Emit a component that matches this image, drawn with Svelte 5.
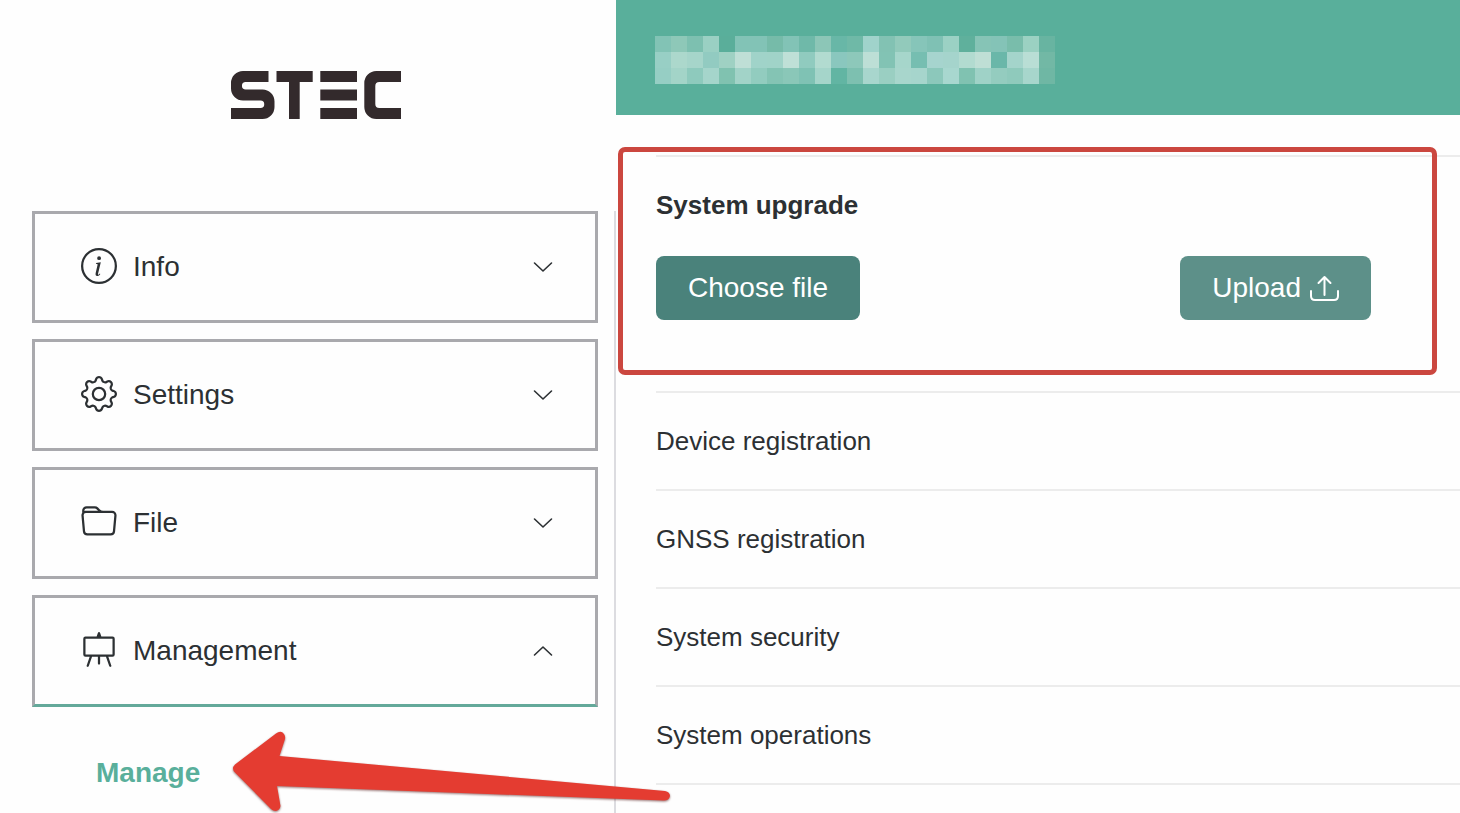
<script lang="ts">
    type MenuItem = { label: string; icon: string[] }

    const menu: MenuItem[] = [
        {
            label: 'Info',
            icon: [
                'M8 15A7 7 0 1 1 8 1a7 7 0 0 1 0 14zm0 1A8 8 0 1 0 8 0a8 8 0 0 0 0 16z',
                'M8.800 6.300 6.700 6.650 6.620 7.020 7.100 7.100C7.350 7.160 7.400 7.250 7.340 7.500L6.520 11.100C6.350 12 6.580 12.450 7.150 12.450 7.700 12.450 8.250 12.100 8.580 11.500L8.320 11.330C8.050 11.700 7.850 11.850 7.700 11.850 7.530 11.850 7.520 11.670 7.580 11.400ZM8.900 4.500a.86.86 0 1 1-1.720 0 .86.86 0 0 1 1.720 0z'
            ]
        },
        {
            label: 'Settings',
            icon: [
                'M8 4.754a3.246 3.246 0 1 0 0 6.492 3.246 3.246 0 0 0 0-6.492zM5.754 8a2.246 2.246 0 1 1 4.492 0 2.246 2.246 0 0 1-4.492 0z',
                'M9.796 1.343c-.527-1.79-3.065-1.79-3.592 0l-.094.319a.873.873 0 0 1-1.255.52l-.292-.16c-1.64-.892-3.433.902-2.54 2.541l.159.292a.873.873 0 0 1-.52 1.255l-.319.094c-1.79.527-1.79 3.065 0 3.592l.319.094a.873.873 0 0 1 .52 1.255l-.16.292c-.892 1.64.901 3.434 2.541 2.54l.292-.159a.873.873 0 0 1 1.255.52l.094.319c.527 1.79 3.065 1.79 3.592 0l.094-.319a.873.873 0 0 1 1.255-.52l.292.16c1.64.893 3.434-.902 2.54-2.541l-.159-.292a.873.873 0 0 1 .52-1.255l.319-.094c1.79-.527 1.79-3.065 0-3.592l-.319-.094a.873.873 0 0 1-.52-1.255l.16-.292c.893-1.64-.902-3.433-2.541-2.54l-.292.159a.873.873 0 0 1-1.255-.52l-.094-.319zm-2.633.283c.246-.835 1.428-.835 1.674 0l.094.319a1.873 1.873 0 0 0 2.693 1.115l.291-.16c.764-.415 1.6.42 1.184 1.185l-.159.292a1.873 1.873 0 0 0 1.116 2.692l.318.094c.835.246.835 1.428 0 1.674l-.319.094a1.873 1.873 0 0 0-1.115 2.693l.16.291c.415.764-.42 1.6-1.185 1.184l-.291-.159a1.873 1.873 0 0 0-2.693 1.116l-.094.318c-.246.835-1.428.835-1.674 0l-.094-.319a1.873 1.873 0 0 0-2.692-1.115l-.292.16c-.764.415-1.6-.42-1.184-1.185l.159-.291A1.873 1.873 0 0 0 1.945 8.93l-.319-.094c-.835-.246-.835-1.428 0-1.674l.319-.094A1.873 1.873 0 0 0 3.06 4.377l-.16-.292c-.415-.764.42-1.6 1.185-1.184l.292.159a1.873 1.873 0 0 0 2.692-1.115l.094-.319z'
            ]
        },
        {
            label: 'File',
            icon: [
                'M.54 3.87.5 3a2 2 0 0 1 2-2h3.672a2 2 0 0 1 1.414.586l.828.828A2 2 0 0 0 9.828 3h3.982a2 2 0 0 1 1.992 2.181l-.637 7A2 2 0 0 1 13.174 14H2.826a2 2 0 0 1-1.991-1.819l-.637-7a1.99 1.99 0 0 1 .342-1.31zM2.19 4a1 1 0 0 0-.996 1.09l.637 7a1 1 0 0 0 .995.91h10.348a1 1 0 0 0 .995-.91l.637-7A1 1 0 0 0 13.81 4H2.19zm4.69-1.707A1 1 0 0 0 6.172 2H2.5a1 1 0 0 0-1 .981l.006.139C1.72 3.042 1.95 3 2.19 3h5.396l-.707-.707z'
            ]
        },
        {
            label: 'Management',
            icon: [
                'M8 0a.5.5 0 0 1 .473.337L9.046 2H14a1 1 0 0 1 1 1v7a1 1 0 0 1-1 1h-1.85l1.323 3.837a.5.5 0 1 1-.946.326L11.092 11H8.5v3a.5.5 0 0 1-1 0v-3H4.908l-1.435 4.163a.5.5 0 1 1-.946-.326L3.85 11H2a1 1 0 0 1-1-1V3a1 1 0 0 1 1-1h4.954L7.527.337A.5.5 0 0 1 8 0zM14 3v7H2V3h12z'
            ]
        }
    ]

    const sections = ['Device registration', 'GNSS registration', 'System security', 'System operations']

    // device name is pixelated, one colour per block
    const mosaic = [
        '82c3b5 8ec8b8 7dc0b0 9ad0c3 5aae9a 82c3b6 82c3b6 76bba9 82c3b6 6fb9a9 8cc6b7 68b7a7 6fb9a7 a0d3cb 82c2b3 92cabb 86c5b9 7fc1b4 9bd1c4 5fb09c 86c4b6 84c3b7 79bdab 9bd1c2 68b4a1',
        '98cfc5 acd8cc a6d5ca 92cbc1 9fd1c3 bfdfd6 a0d3c9 a0d3c8 bfe0d7 90cbbf b2dbd0 8ac7be 8dc8ba bddfd6 82c3b4 a6d6cb 76beb1 a6d4ce a5d4cc b2dbd0 bfdfd5 6ab7a9 a4d4cb b9ded5 72b8a5',
        '96cec4 a3d4c8 8ecabd a5d5cb 80c2b0 a2d3c8 92ccbf 84c4b4 8ac7b8 7fc2b4 a5d5ca 62b5a3 7dc0b0 a8d6cd 9acfc2 a8d6cc a6d5cc 8cc8bb a8d7cf 80c2b1 9fd2c7 94ccbf 8fcabc a7d6cc 6fb7a4'
    ].map((row) => row.split(' '))

    let opened = 'Management'
    let fileInput: HTMLInputElement

    function toggle(label: string) {
        opened = opened === label ? '' : label
    }
</script>

<div class="page">
    <aside>
        <div class="logo">
            <svg viewBox="0 0 170 48" width="170" height="48" role="img" aria-label="STEC">
                <path d="M37.5 0H12A12 12 0 0 0 0 12V17.5A12 12 0 0 0 12 29.5H29.5A3.75 3.75 0 0 1 29.5 37H0V48H31.5A12 12 0 0 0 43.5 36V30.5A12 12 0 0 0 31.5 18.5H14.7A3.75 3.75 0 0 1 14.7 11H37.5Z" />
                <path d="M45.5 0H81.7V11H68.7V48H58V11H45.5Z" />
                <path d="M89.3 0H126V11H89.3ZM89.3 18.5H126V29.5H89.3ZM89.3 37H126V48H89.3Z" />
                <path d="M170 0H145.3A12 12 0 0 0 133.3 12V36A12 12 0 0 0 145.3 48H170V37H148.3A4 4 0 0 1 144.3 33V15A4 4 0 0 1 148.3 11H170Z" />
            </svg>
        </div>

        <nav>
            {#each menu as item}
                <button class="menu-item" class:opened={opened === item.label} on:click={() => toggle(item.label)}>
                    <svg class="icon" viewBox="0 0 16 16" aria-hidden="true">
                        {#each item.icon as d}
                            <path {d} />
                        {/each}
                    </svg>
                    <span>{item.label}</span>
                    <svg class="chevron" viewBox="0 0 20 12" aria-hidden="true">
                        <path d="M1.5 2 10 10 18.5 2" />
                    </svg>
                </button>
            {/each}

            {#if opened === 'Management'}
                <div class="submenu">
                    <a href="#manage">Manage</a>
                    <svg class="pointer" viewBox="0 0 440 84" aria-hidden="true">
                        <path d="M3 34.5 44 3.5Q49 0 52 4 53.500 6 53 9L47.500 26 433 61Q438 62 438 66 437 70.500 432 70.500L45 56 48.500 76Q48 80 44 81 41 81 39 79L3 42.500Q-1 38.500 3 34.500Z" />
                    </svg>
                </div>
            {/if}
        </nav>
    </aside>

    <main>
        <header>
            <svg viewBox="0 0 400 48" width="400" height="48" shape-rendering="crispEdges" aria-hidden="true">
                {#each mosaic as row, y}
                    {#each row as color, x}
                        <rect x={x * 16} y={y * 16} width="16" height="16" fill={`#${ color }`} />
                    {/each}
                {/each}
            </svg>
        </header>

        <div class="sections">
            <section class="upgrade">
                <h2>System upgrade</h2>
                <div class="actions">
                    <input type="file" hidden aria-label="Choose file" bind:this={fileInput} />
                    <button class="btn" on:click={() => fileInput.click()}>Choose file</button>
                    <button class="btn light">
                        Upload
                        <svg viewBox="0 0 30 26" width="30" height="26" aria-hidden="true">
                            <path d="M2 16V21Q2 25 6 25H25Q29 25 29 21V16M15.500 20V2M9.500 8 15.500 2 21.500 8" />
                        </svg>
                    </button>
                </div>
                <div class="highlight"></div>
            </section>

            {#each sections as title}
                <section>
                    <h2>{title}</h2>
                </section>
            {/each}
        </div>
    </main>
</div>

<style>
    :global(body) {
        background-color: #fefefe;
    }

    .page {
        --green: #59af9b;
        --red: #e43c31;
        --dark: #2c3033;
        display: flex;
        min-height: 100vh;
        font-family: 'Liberation Sans', Arial, sans-serif;
        font-size: 28px;
        line-height: 34px;
        color: var(--dark);
    }

    aside {
        display: flex;
        flex-direction: column;
        flex: 0 0 616px;
    }

    .logo {
        display: flex;
        justify-content: center;
        padding: 71px 16px 92px 32px;
        fill: #332a2c;
    }

    nav {
        display: flex;
        flex-direction: column;
        gap: 16px;
        flex: 1;
        padding: 0 16px 0 32px;
        border-right: 2px solid #dcdce0;
    }

    button {
        font: inherit;
        cursor: pointer;
    }

    .menu-item {
        display: flex;
        align-items: center;
        gap: 16px;
        height: 112px;
        padding: 0 42px 0 46px;
        box-sizing: border-box;
        border: 3px solid #a9a9ad;
        background-color: transparent;
        color: var(--dark);
        text-align: left;
    }

    .menu-item.opened {
        border-bottom-color: #64a99a;
    }

    .menu-item span {
        flex: 1;
    }

    .icon {
        width: 36px;
        height: 36px;
        margin-bottom: 2px;
        fill: currentColor;
        fill-rule: evenodd;
    }

    .chevron {
        width: 20px;
        height: 12px;
        fill: none;
        stroke: currentColor;
        stroke-width: 1.6;
        stroke-linecap: round;
        stroke-linejoin: round;
    }

    .menu-item.opened .chevron {
        transform: rotate(180deg);
    }

    .submenu {
        position: relative;
        padding: 33px 64px 0;
    }

    .submenu a {
        color: var(--green);
        font-weight: 700;
        text-decoration: none;
    }

    .pointer {
        position: absolute;
        z-index: 2;
        left: 200px;
        top: 7px;
        width: 440px;
        height: 84px;
        fill: var(--red);
        filter: drop-shadow(0 1px 1px rgba(80, 20, 20, 0.6));
        pointer-events: none;
    }

    main {
        flex: 1;
        min-width: 0;
    }

    header {
        display: flex;
        height: 115px;
        padding: 36px 39px 0;
        box-sizing: border-box;
        background-color: var(--green);
    }

    .sections {
        padding: 40px 0 0 40px;
    }

    section {
        border-top: 2px solid #ececec;
    }

    section:last-child {
        border-bottom: 2px solid #ececec;
    }

    h2 {
        margin: 0;
        font-size: 26px;
        font-weight: 400;
        line-height: 96px;
    }

    .upgrade {
        position: relative;
    }

    .upgrade h2 {
        font-weight: 700;
    }

    .actions {
        display: flex;
        justify-content: space-between;
        padding: 3px 89px 71px 0;
    }

    .btn {
        display: flex;
        align-items: center;
        gap: 8px;
        height: 64px;
        padding: 0 32px;
        border: none;
        border-radius: 8px;
        background-color: #4a827b;
        color: white;
    }

    .btn.light {
        background-color: #5d9089;
    }

    .btn svg {
        fill: none;
        stroke: currentColor;
        stroke-width: 2;
        stroke-linecap: round;
        stroke-linejoin: round;
    }

    .highlight {
        position: absolute;
        top: -10px;
        right: 23px;
        bottom: 16px;
        left: -38px;
        border: 5px solid #cb473f;
        border-radius: 7px;
        pointer-events: none;
    }
</style>
